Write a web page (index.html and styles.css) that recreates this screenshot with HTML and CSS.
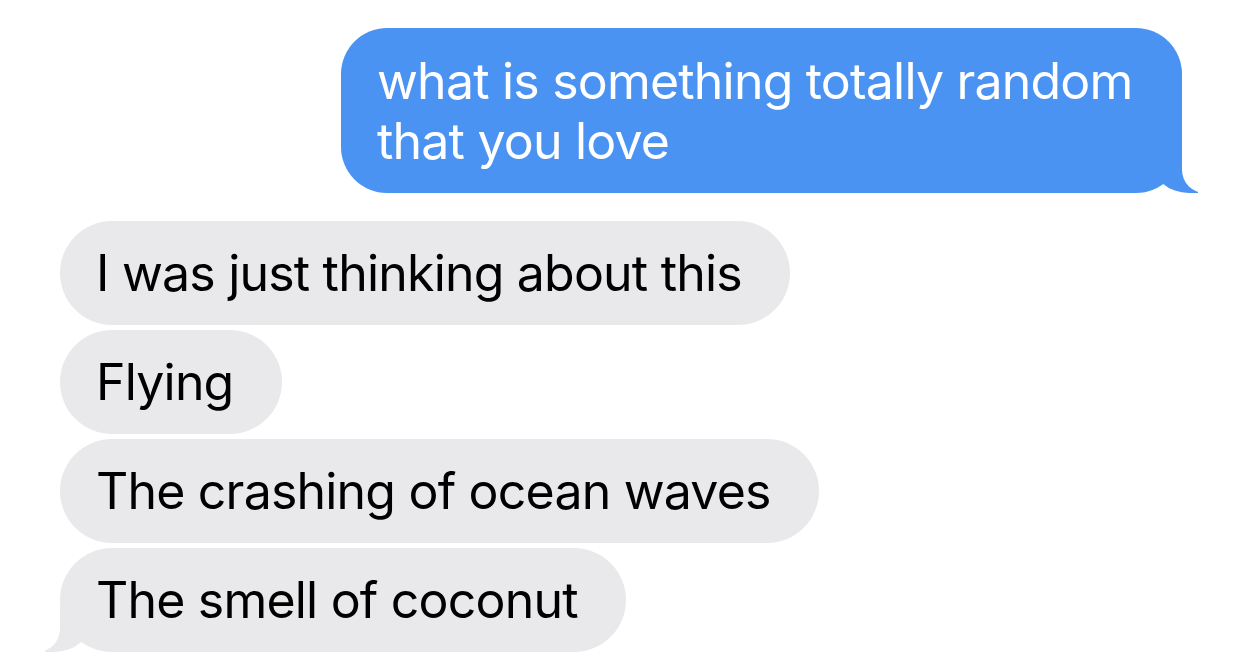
FILE: index.html
```html
<!DOCTYPE html>
<html lang="en">
<head>
<meta charset="utf-8">
<title>Messages</title>
<link rel="stylesheet" href="styles.css">
</head>
<body>
<div class="thread">
  <div class="msg sent tail">what is something totally random that you love</div>
  <div class="group">
    <div class="msg recv">I was just thinking about this</div>
    <div class="msg recv">Flying</div>
    <div class="msg recv">The crashing of ocean waves</div>
    <div class="msg recv tail">The smell of coconut</div>
  </div>
</div>
</body>
</html>
```
FILE: styles.css
```css
html, body {
  margin: 0;
  padding: 0;
  background: #ffffff;
}
body {
  width: 1242px;
  height: 664px;
  overflow: hidden;
  font-family: "Inter", "Noto Sans", "Liberation Sans", sans-serif;
}
.thread {
  display: flex;
  flex-direction: column;
  padding: 28px 60px 0 60px;
  gap: 28px;
}
.group {
  display: flex;
  flex-direction: column;
  align-items: flex-start;
  gap: 5px;
}
.msg {
  position: relative;
  box-sizing: border-box;
  font-size: 50px;
  letter-spacing: -0.8px;
}
.sent {
  align-self: flex-end;
  width: 841px;
  background: #4b93f3;
  color: #ffffff;
  border-radius: 46px;
  padding: 23px 30px 22px 36px;
  line-height: 60px;
}
.recv {
  background: #e9e9eb;
  color: #000000;
  height: 104px;
  line-height: 104px;
  border-radius: 52px;
  padding: 0 48px 0 36px;
  white-space: nowrap;
}
.recv.long {
  letter-spacing: -1.1px;
}
.sent.tail::before {
  content: "";
  position: absolute;
  bottom: 0;
  right: -16px;
  width: 46px;
  height: 46px;
  background: #4b93f3;
  border-bottom-left-radius: 37px 32px;
}
.sent.tail::after {
  content: "";
  position: absolute;
  bottom: 0;
  right: -60px;
  width: 60px;
  height: 46px;
  background: #ffffff;
  border-bottom-left-radius: 23px;
}
.recv.tail::before {
  content: "";
  position: absolute;
  bottom: 0;
  left: -15px;
  width: 46px;
  height: 46px;
  background: #e9e9eb;
  border-bottom-right-radius: 37px 32px;
}
.recv.tail::after {
  content: "";
  position: absolute;
  bottom: 0;
  left: -60px;
  width: 60px;
  height: 46px;
  background: #ffffff;
  border-bottom-right-radius: 23px;
}
```
